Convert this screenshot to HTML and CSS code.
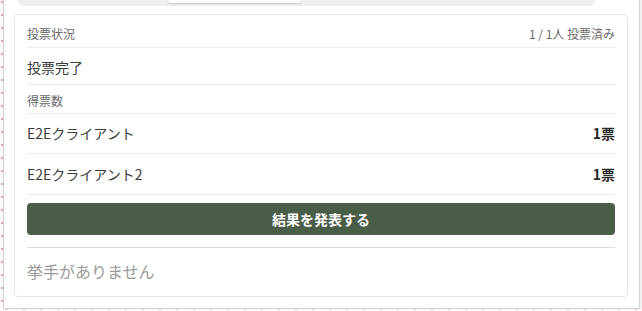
FILE: index.html
```html
<!DOCTYPE html>
<html lang="ja">
<head>
<meta charset="utf-8">
<link rel="stylesheet" href="styles.css">
</head>
<body>
<div class="frame">
  <div class="tabbar"><div class="tab-active"></div></div>
  <div class="card">
    <div class="row row-head">
      <span>投票状況</span>
      <span>1 / 1人 投票済み</span>
    </div>
    <div class="row row-status">投票完了</div>
    <div class="row row-label">得票数</div>
    <div class="row row-item row-item1">
      <span>E2Eクライアント</span>
      <span class="votes">1票</span>
    </div>
    <div class="row row-item row-item2">
      <span>E2Eクライアント2</span>
      <span class="votes">1票</span>
    </div>
    <button class="announce">結果を発表する</button>
    <div class="hands">挙手がありません</div>
  </div>
</div>
</body>
</html>
```
FILE: styles.css
```css
html, body {
  margin: 0;
  padding: 0;
}
body {
  width: 642px;
  height: 311px;
  overflow: hidden;
  background-color: #fdf9fb;
  background-image:
    radial-gradient(circle at 2px 2px, #eb9cc6 0.8px, transparent 1.2px),
    radial-gradient(circle at 7px 9px, #f4c0dc 0.8px, transparent 1.2px);
  background-size: 11px 13px, 17px 15px;
  font-family: "Noto Sans CJK JP", "Noto Sans", sans-serif;
}
.frame {
  margin-left: 3px;
  width: 637px;
  height: 309px;
  box-sizing: border-box;
  background: #fff;
  border: 1px solid #d2d2d2;
  border-top: none;
  box-shadow: 2px 0 0 #f1f1f1;
  overflow: hidden;
}
.tabbar {
  margin-left: 14px;
  width: 577px;
  height: 6px;
  background: #efefef;
  border-radius: 0 0 12px 12px;
}
.tab-active {
  margin-left: 150px;
  width: 133px;
  height: 3px;
  background: #fff;
  border-radius: 0 0 6px 6px;
  box-shadow: 0 1px 2px rgba(0, 0, 0, 0.18);
}
.card {
  margin: 8px 11px 0 10px;
  border: 1px solid #e6e6e6;
  border-radius: 4px;
  padding: 0 12px 13px;
  background: #fff;
}
.row {
  display: flex;
  justify-content: space-between;
  align-items: center;
  border-bottom: 1px solid #ebebeb;
}
.row-head {
  padding: 9px 0 3px;
  font-size: 12px;
  line-height: 20px;
  color: #6a6a6a;
}
.row-status {
  padding: 9px 0 7px;
  font-size: 14px;
  line-height: 20px;
  color: #3c3c3c;
}
.row-label {
  padding: 7px 0 3px;
  font-size: 12px;
  line-height: 18px;
  color: #6a6a6a;
}
.row-item {
  font-size: 14px;
  line-height: 20px;
  color: #3c3c3c;
}
.row-item1 {
  padding: 9px 0 10px;
}
.row-item2 {
  padding: 10px 0 10px;
}
.votes {
  font-weight: 700;
  font-size: 14px;
  color: #2a2a2a;
}
.announce {
  display: block;
  width: 100%;
  margin-top: 8px;
  height: 32px;
  border: none;
  border-radius: 4px;
  background: #4a5d49;
  color: #fff;
  font-family: inherit;
  font-size: 14px;
  font-weight: 700;
  line-height: 32px;
  padding: 0;
}
.hands {
  margin-top: 12px;
  border-top: 1px solid #dcdcdc;
  padding-top: 11px;
  font-size: 16px;
  line-height: 24px;
  color: #9a9a9a;
}
```
